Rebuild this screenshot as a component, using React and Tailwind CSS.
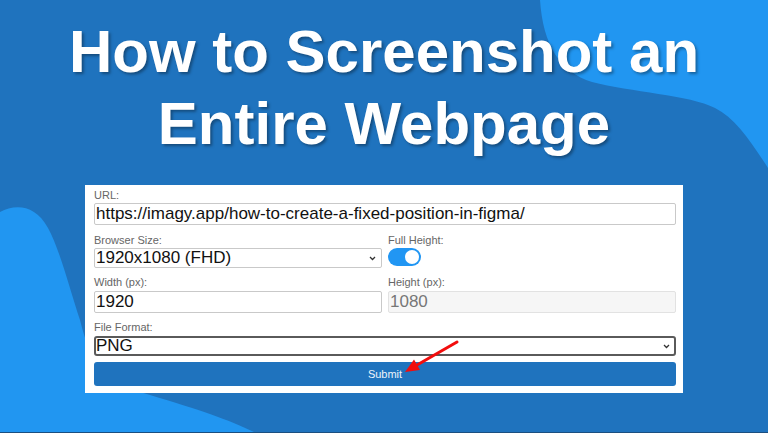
import { useState } from 'react';

const label = 'block h-[13px] text-[11px] leading-[13px] text-[#666]';

function Chevron() {
  return (
    <svg width="7" height="5" viewBox="0 0 7 5" className="shrink-0">
      <path d="M1 1l2.5 2.5L6 1" fill="none" stroke="#333" strokeWidth="1.3" />
    </svg>
  );
}

export default function App() {
  const [full, setFull] = useState(true);

  return (
    <div className="relative w-[768px] h-[433px] overflow-hidden bg-[#1f73be] border-b border-[#1b4f80] font-['Liberation_Sans',Arial,sans-serif]">
      {/* background blobs */}
      <svg className="absolute inset-0" width="768" height="433" viewBox="0 0 768 433">
        <path
          d="M540 0 C543 45 560 72 592 82 C630 92 690 95 715 108 C735 118 750 140 768 168 L768 0 Z"
          fill="#2196f1"
        />
        <path
          d="M0 212 C15 204 35 204 48 228 C60 250 70 290 80 320 C90 360 100 380 150 395 C200 410 230 420 256 433 L0 433 Z"
          fill="#2196f1"
        />
      </svg>

      <div className="relative flex flex-col items-center">
        <h1 className="mt-[16px] text-center text-[60px] leading-[72px] font-bold text-white [text-shadow:2px_2px_3px_rgba(0,0,0,0.35)]">
          How to Screenshot an
          <br />
          Entire Webpage
        </h1>

        {/* form card */}
        <div className="mt-[25px] w-[598px] bg-white pl-[9px] pr-[7px] pt-[4px] pb-[7px]">
          <span className={label}>URL:</span>
          <div className="mt-[1px] h-[22px] flex items-center border border-[#c9c9c9] rounded-[2px] px-[1px] text-[17px] text-[#111]">
            https://imagy.app/how-to-create-a-fixed-position-in-figma/
          </div>

          <div className="mt-[9px] grid grid-cols-2 gap-x-[6px]">
            <div>
              <span className={label}>Browser Size:</span>
              <div className="mt-[1px] h-[20px] flex items-center justify-between border border-[#c9c9c9] rounded-[2px] pl-[1px] pr-[5px] text-[17px] text-[#111]">
                <span>1920x1080 (FHD)</span>
                <Chevron />
              </div>
            </div>
            <div>
              <span className={label}>Full Height:</span>
              <button
                onClick={() => setFull((f) => !f)}
                className={`mt-[1px] w-[33px] h-[18px] rounded-full p-[2px] flex items-center ${
                  full ? 'bg-[#2196f3] justify-end' : 'bg-[#ccc] justify-start'
                }`}
              >
                <span className="w-[14px] h-[14px] rounded-full bg-white" />
              </button>
            </div>
          </div>

          <div className="mt-[8px] grid grid-cols-2 gap-x-[6px]">
            <div>
              <span className={label}>Width (px):</span>
              <div className="mt-[2px] h-[22px] flex items-center border border-[#c9c9c9] rounded-[2px] px-[1px] text-[17px] text-[#111]">
                1920
              </div>
            </div>
            <div>
              <span className={label}>Height (px):</span>
              <div className="mt-[2px] h-[22px] flex items-center border border-[#e2e2e2] bg-[#f6f6f6] rounded-[2px] px-[1px] text-[17px] text-[#777]">
                1080
              </div>
            </div>
          </div>

          <span className={`${label} mt-[8px]`}>File Format:</span>
          <div className="mt-[2px] h-[20px] flex items-center justify-between border-2 border-[#5a5a5a] rounded-[3px] pr-[4px] text-[17px] text-[#111]">
            <span>PNG</span>
            <Chevron />
          </div>

          <button className="mt-[6px] w-full h-[24px] rounded-[3px] bg-[#1f73be] text-[11px] text-[#eef4fb]">
            Submit
          </button>
        </div>
      </div>

      {/* red pointer arrow */}
      <svg className="absolute inset-0 pointer-events-none" width="768" height="433" viewBox="0 0 768 433">
        <line x1="457" y1="342" x2="417" y2="365" stroke="#f20d0d" strokeWidth="3" strokeLinecap="round" />
        <polygon points="405,372 420,370 414,359.5" fill="#f20d0d" />
      </svg>
    </div>
  );
}
